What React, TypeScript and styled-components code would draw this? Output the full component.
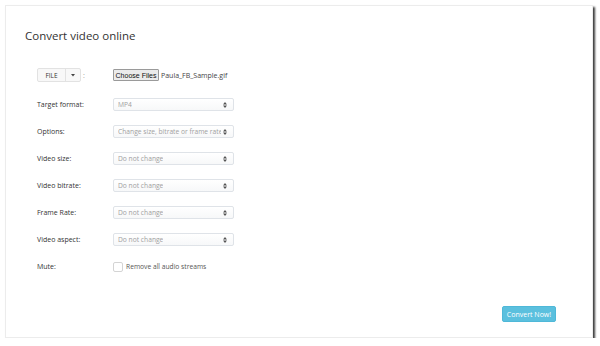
import React from "react";
import styled, { createGlobalStyle } from "styled-components";

const Global = createGlobalStyle`
  html, body { margin: 0; padding: 0; background: #ffffff; }
  body { font-family: "Open Sans", "Liberation Sans", sans-serif; color: #333; }
  * { box-sizing: border-box; }
`;

const Card = styled.div`
  margin: 5px 0 0 5px;
  width: 588px;
  height: 333px;
  background: #fff;
  border: 1px solid #ececec;
  box-shadow: 2px 2px 2px #3c3c3c;
  display: flex;
  flex-direction: column;
  padding: 22px 36px 15px 19px;
`;

const Title = styled.h1`
  margin: 0;
  font-size: 11.5px;
  line-height: 16px;
  font-weight: 400;
  color: #333;
`;

const Form = styled.div`
  margin: 24px 0 0 12px;
  display: flex;
  flex-direction: column;
  gap: 13px;
`;

const Row = styled.div<{ $first?: boolean }>`
  display: grid;
  grid-template-columns: 76px auto;
  align-items: center;
  height: 14px;
  margin-bottom: ${(p) => (p.$first ? "2.5px" : "0")};
`;

const Label = styled.span`
  font-size: 7px;
  color: #333;
  white-space: nowrap;
`;

const BtnGroup = styled.div`
  display: flex;
  align-items: center;
  gap: 2px;
`;

const Group = styled.div`
  display: flex;
  height: 14px;
  border: 1px solid #e2e2e2;
  border-radius: 2px;
  background: #f8f8f8;
`;

const GroupBtn = styled.span<{ $w: number }>`
  width: ${(p) => p.$w}px;
  display: flex;
  align-items: center;
  justify-content: center;
  font-size: 6.5px;
  color: #333;
  & + & { border-left: 1px solid #e2e2e2; }
`;

const Colon = styled.span`
  font-size: 7px;
  color: #999;
`;

const FileWrap = styled.div`
  display: flex;
  align-items: center;
  gap: 2px;
`;

const ChooseBtn = styled.span`
  display: inline-flex;
  align-items: center;
  justify-content: center;
  width: 46px;
  height: 12px;
  border: 1px solid #9a9a9a;
  border-radius: 1px;
  background: #ebebeb;
  font-family: "Liberation Sans", Arial, sans-serif;
  font-size: 7px;
  color: #111;
`;

const FileName = styled.span`
  font-size: 7px;
  color: #444;
`;

const Select = styled.div`
  width: 121px;
  height: 13px;
  border: 1px solid #dfe3e8;
  border-radius: 2px;
  background: linear-gradient(#ffffff, #f7f8f9);
  display: flex;
  align-items: center;
  justify-content: space-between;
  gap: 2px;
  padding: 0 6px 0 4px;
  font-size: 6.7px;
  color: #a0a0a0;
  white-space: nowrap;
  overflow: hidden;
`;

const SelText = styled.span`
  overflow: hidden;
  min-width: 0;
`;

const CheckRow = styled.label`
  display: flex;
  align-items: center;
  gap: 3px;
  font-size: 6.7px;
  color: #555;
`;

const Box = styled.span`
  width: 10px;
  height: 10px;
  border: 1px solid #d4d4d4;
  border-radius: 2px;
  background: #fff;
`;

const Footer = styled.div`
  margin-top: auto;
  display: flex;
  justify-content: flex-end;
`;

const ConvertBtn = styled.button`
  width: 54px;
  height: 16px;
  border: 1px solid #4fb8d8;
  border-radius: 2px;
  background: #5bc0de;
  color: #fff;
  font-family: "Open Sans", "Liberation Sans", sans-serif;
  font-size: 7px;
  padding: 0;
`;

const Arrows = () => (
  <svg width="4" height="6" viewBox="0 0 4 6" style={{ flexShrink: 0 }}>
    <path d="M0 2.4 L2 0 L4 2.4 Z M0 3.6 L2 6 L4 3.6 Z" fill="#555" />
  </svg>
);

const Caret = () => (
  <svg width="4" height="3" viewBox="0 0 4 3">
    <path d="M0 0 L4 0 L2 2.5 Z" fill="#444" />
  </svg>
);

const selects: [string, string][] = [
  ["Target format:", "MP4"],
  ["Options:", "Change size, bitrate or frame rate"],
  ["Video size:", "Do not change"],
  ["Video bitrate:", "Do not change"],
  ["Frame Rate:", "Do not change"],
  ["Video aspect:", "Do not change"],
];

export default function App() {
  return (
    <>
      <Global />
      <Card>
        <Title>Convert video online</Title>
        <Form>
          <Row $first>
            <BtnGroup>
              <Group>
                <GroupBtn $w={27}>FILE</GroupBtn>
                <GroupBtn $w={15}>
                  <Caret />
                </GroupBtn>
              </Group>
              <Colon>:</Colon>
            </BtnGroup>
            <FileWrap>
              <ChooseBtn>Choose Files</ChooseBtn>
              <FileName>Paula_FB_Sample.gif</FileName>
            </FileWrap>
          </Row>
          {selects.map(([label, value]) => (
            <Row key={label}>
              <Label>{label}</Label>
              <Select>
                <SelText>{value}</SelText>
                <Arrows />
              </Select>
            </Row>
          ))}
          <Row>
            <Label>Mute:</Label>
            <CheckRow>
              <Box />
              Remove all audio streams
            </CheckRow>
          </Row>
        </Form>
        <Footer>
          <ConvertBtn>Convert Now!</ConvertBtn>
        </Footer>
      </Card>
    </>
  );
}
